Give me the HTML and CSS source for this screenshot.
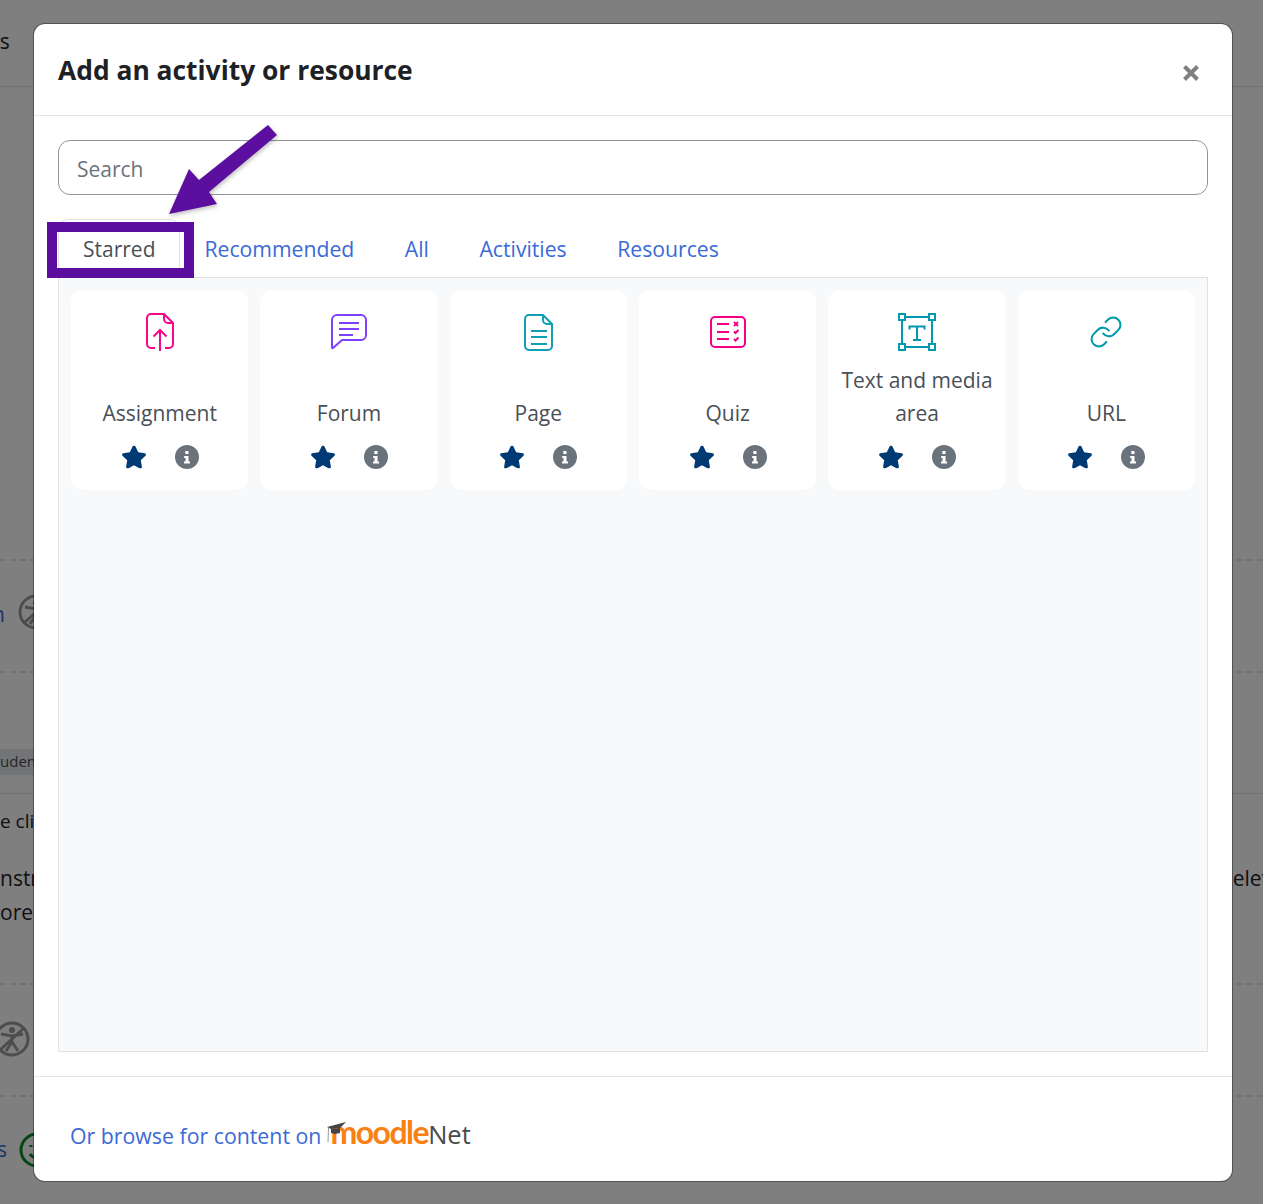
FILE: index.html
```html
<!DOCTYPE html>
<html lang="en">
<head>
    <meta charset="UTF-8">
    <title>Add an activity or resource</title>
    <link rel="stylesheet" href="styles.css">
</head>
<body>
    <!-- course page behind the dialog -->
    <div class="page">
        <div class="bgRow bgTop"><span class="peek peekEs">es</span></div>
        <div class="bgRow bgDashed bgAccess">
            <span class="peek peekBlue peekN">n</span>
            <svg class="bgIcon" width="36" height="36" viewBox="0 0 36 36"><use href="#accessIcon"/></svg>
        </div>
        <div class="bgRow bgDashed bgBadge"><span class="badge">uden</span></div>
        <div class="bgText">
            <div class="peek bgLineOne">e cli</div>
            <div class="bgPair">
                <div class="peek">nstr<br>ore</div>
                <div class="peek peekRight">elet</div>
            </div>
        </div>
        <div class="bgRow bgDashed bgAccessTwo">
            <svg class="bgIcon" width="36" height="36" viewBox="0 0 36 36"><use href="#accessIcon"/></svg>
        </div>
        <div class="bgRow bgDashed bgSmile">
            <span class="peek peekBlue peekS">s</span>
            <svg width="36" height="36" viewBox="0 0 36 36" fill="none" stroke="#0e8a2a" stroke-width="3">
                <circle cx="18" cy="18" r="16"/><path d="M11 22c3 5 11 5 14 0"/><path d="M12 13v2M24 13v2"/>
            </svg>
        </div>
    </div>

    <svg class="defs" width="0" height="0">
        <symbol id="accessIcon" viewBox="0 0 36 36">
            <g fill="none" stroke="#9a9a9a" stroke-width="3">
                <circle cx="18" cy="18" r="16"/>
                <path d="M7 13l11 2 11-2M18 15v6M18 21l-6 9M18 21l6 9M6 29L30 7"/>
            </g>
            <circle cx="18" cy="9" r="3" fill="#9a9a9a"/>
        </symbol>
        <symbol id="starIcon" viewBox="0 0 576 512">
            <path fill="#003a75" d="M316.9 18C311.6 7 300.4 0 288.1 0s-23.4 7-28.8 18L195 150.3 51.4 171.5c-12 1.8-22 10.2-25.7 21.7s-.7 24.2 7.9 32.7L137.8 329 113.2 474.7c-2 12 3 24.2 12.9 31.3s23 8 33.8 2.3l128.3-68.5 128.3 68.5c10.8 5.7 23.9 4.9 33.8-2.3s14.9-19.3 12.9-31.3L438.5 329 542.7 225.9c8.6-8.5 11.7-21.2 7.9-32.7s-13.7-19.9-25.7-21.7L381.2 150.3 316.9 18z"/>
        </symbol>
        <symbol id="infoIcon" viewBox="0 0 24 24">
            <circle cx="12" cy="12" r="12" fill="#6a737b"/>
            <path fill="#fff" d="M10.3 6h3.2v3h-3.2zM9.2 11h4.3v5.4H15v2.1H9v-2.1h1.5v-3.3H9.2z"/>
        </symbol>
    </svg>

    <div class="backdrop">
        <div class="modal">
            <div class="modalHeader">
                <h5 class="modalTitle">Add an activity or resource</h5>
                <svg class="closeIcon" width="18" height="18" viewBox="0 0 18 18" aria-label="Close"><path d="M2.5 2.5l13 13M15.500 2.500l-13 13"/></svg>
            </div>
            <div class="modalBody">
                <div class="searchBox">Search</div>
                <div class="tabs">
                    <span class="tab tabActive">Starred</span>
                    <span class="tab">Recommended</span>
                    <span class="tab">All</span>
                    <span class="tab">Activities</span>
                    <span class="tab">Resources</span>
                </div>
                <div class="tabPanel">
                    <div class="card">
                        <div class="cardIcon">
                            <svg width="28" height="38" viewBox="0 0 28 38" fill="none" stroke="#f7068b" stroke-width="2">
                                <path d="M9 35H5a4 4 0 0 1-4-4V5a4 4 0 0 1 4-4h13l9 9v21a4 4 0 0 1-4 4h-4"/>
                                <path d="M18 1v5a4 4 0 0 0 4 4h5"/>
                                <path d="M14 38V17M7.500 23.500L14 17l6.500 6.500"/>
                            </svg>
                        </div>
                        <div class="cardName">Assignment</div>
                        <div class="cardFooter">
                            <svg class="star" viewBox="0 0 576 512"><use href="#starIcon"/></svg>
                            <svg class="info" viewBox="0 0 24 24"><use href="#infoIcon"/></svg>
                        </div>
                    </div>
                    <div class="card">
                        <div class="cardIcon">
                            <svg width="36" height="36" viewBox="0 0 36 36" fill="none" stroke="#7f3fff" stroke-width="2">
                                <path d="M6 1h24a5 5 0 0 1 5 5v15a5 5 0 0 1-5 5H11l-9 8a.6.600 0 0 1-1-.5V6a5 5 0 0 1 5-5z"/>
                                <path d="M8 9h20M8 15h20M8 21h14"/>
                            </svg>
                        </div>
                        <div class="cardName">Forum</div>
                        <div class="cardFooter">
                            <svg class="star" viewBox="0 0 576 512"><use href="#starIcon"/></svg>
                            <svg class="info" viewBox="0 0 24 24"><use href="#infoIcon"/></svg>
                        </div>
                    </div>
                    <div class="card">
                        <div class="cardIcon">
                            <svg width="29" height="37" viewBox="0 0 29 37" fill="none" stroke="#0f9fb5" stroke-width="2">
                                <path d="M5 1h14l9 9v22a4 4 0 0 1-4 4H5a4 4 0 0 1-4-4V5a4 4 0 0 1 4-4z"/>
                                <path d="M19 1v5a4 4 0 0 0 4 4h5"/>
                                <path d="M7 17h16M7 23h16M7 30h16"/>
                            </svg>
                        </div>
                        <div class="cardName">Page</div>
                        <div class="cardFooter">
                            <svg class="star" viewBox="0 0 576 512"><use href="#starIcon"/></svg>
                            <svg class="info" viewBox="0 0 24 24"><use href="#infoIcon"/></svg>
                        </div>
                    </div>
                    <div class="card">
                        <div class="cardIcon">
                            <svg width="36" height="32" viewBox="0 0 36 32" fill="none" stroke="#f50087" stroke-width="2">
                                <rect x="1" y="1" width="34" height="30" rx="4"/>
                                <path d="M7 8h12M7 16h12M7 23h12"/>
                                <path d="M24 6l4 4M28 6l-4 4M24 15.500l1.500 1.500 3-3M24 23l1.500 1.500 3-3"/>
                            </svg>
                        </div>
                        <div class="cardName">Quiz</div>
                        <div class="cardFooter">
                            <svg class="star" viewBox="0 0 576 512"><use href="#starIcon"/></svg>
                            <svg class="info" viewBox="0 0 24 24"><use href="#infoIcon"/></svg>
                        </div>
                    </div>
                    <div class="card">
                        <div class="cardIcon">
                            <svg width="38" height="38" viewBox="0 0 38 38" fill="none" stroke="#0099ad" stroke-width="2">
                                <path d="M7 4h24M7 34h24M4 7v24M34 7v24"/>
                                <rect x="1" y="1" width="6" height="6"/>
                                <rect x="31" y="1" width="6" height="6"/>
                                <rect x="1" y="31" width="6" height="6"/>
                                <rect x="31" y="31" width="6" height="6"/>
                                <path d="M11.500 16.500v-3h15v3M19 13.500V27M15 27h8"/>
                            </svg>
                        </div>
                        <div class="cardName">Text and media area</div>
                        <div class="cardFooter">
                            <svg class="star" viewBox="0 0 576 512"><use href="#starIcon"/></svg>
                            <svg class="info" viewBox="0 0 24 24"><use href="#infoIcon"/></svg>
                        </div>
                    </div>
                    <div class="card">
                        <div class="cardIcon">
                            <svg width="32" height="32" viewBox="1 1 22 22" fill="none" stroke="#0099ad" stroke-width="1.400" stroke-linecap="round">
                                <path d="M10 13a5 5 0 0 0 7.540.54l3-3a5 5 0 0 0-7.070-7.070l-1.720 1.710"/>
                                <path d="M14 11a5 5 0 0 0-7.540-.54l-3 3a5 5 0 0 0 7.070 7.070l1.710-1.710"/>
                            </svg>
                        </div>
                        <div class="cardName">URL</div>
                        <div class="cardFooter">
                            <svg class="star" viewBox="0 0 576 512"><use href="#starIcon"/></svg>
                            <svg class="info" viewBox="0 0 24 24"><use href="#infoIcon"/></svg>
                        </div>
                    </div>
                </div>
            </div>
            <div class="modalFooter">
                <span class="browseLink">Or browse for content on</span>
                <span class="logo">
                    <svg class="logoCap" width="20" height="20" viewBox="0 0 20 20">
                        <path fill="#444" d="M0 5L19 0 13 6 4 7z"/>
                        <path fill="#444" d="M4 7l9-1v5l-5 1-4-1z"/>
                        <path fill="none" stroke="#999" d="M1.500 5.500L1 20"/>
                    </svg>
                    <span class="logoMoodle">moodle</span><span class="logoNet">Net</span>
                </span>
            </div>
        </div>
    </div>

    <!-- annotation drawn on top of the screenshot -->
    <div class="markBox"></div>
    <svg class="markArrow" width="120" height="100" viewBox="165 122 120 100">
        <path fill="#5c0f9f" d="M268 125l9 10-68 57 8 12-48 10 20-45 10 11z"/>
    </svg>
</body>
</html>
```

FILE: styles.css
```css
* {
    box-sizing: border-box;
}

html, body {
    margin: 0;
    height: 100%;
}

body {
    position: relative;
    width: 1263px;
    height: 1204px;
    overflow: hidden;
    font-family: "Open Sans", "Noto Sans", sans-serif;
    font-size: 21px;
    line-height: 33.6px;
    color: #495057;
    background-color: #fff;
}

.defs {
    display: block;
}

/* page behind the dialog */
.page {
    height: 1204px;
    color: #1d2125;
}

.bgRow {
    display: flex;
    align-items: center;
    gap: 14px;
}

.bgTop {
    height: 87px;
    padding-bottom: 2px;
    border-bottom: 1px solid #dee2e6;
}

.peekEs {
    margin-left: -12px;
}

.bgDashed {
    border-top: 2px dashed #dee2e6;
}

.bgAccess {
    margin-top: 472px;
    height: 112px;
    padding-bottom: 8px;
}

.peekN {
    width: 12px;
    margin-left: -8px;
    margin-right: 0;
    padding-top: 6px;
}

.bgBadge {
    height: 123px;
    align-items: flex-start;
    padding-top: 76px;
    border-bottom: 1px solid #dee2e6;
}

.badge {
    width: 34px;
    height: 26px;
    line-height: 25px;
    font-size: 15px;
    background-color: #e6e9ee;
    color: #495057;
}

.bgText {
    height: 189px;
    padding-top: 11px;
    display: flex;
    flex-direction: column;
    gap: 22px;
}

.bgLineOne {
    font-size: 19px;
}

.bgPair {
    display: flex;
    justify-content: space-between;
    line-height: 34px;
}

.peekRight {
    margin-right: -6px;
}

.peek {
    display: block;
    white-space: nowrap;
}

.peekBlue {
    color: #3a6ad6;
}

.peekS {
    width: 9px;
    margin-left: -3px;
    margin-right: -1px;
}

.bgAccessTwo {
    height: 112px;
    padding-bottom: 2px;
}

.bgAccessTwo .bgIcon {
    margin-left: -6px;
}

.bgSmile {
    height: 108px;
}

/* dialog */
.backdrop {
    position: absolute;
    top: 0;
    left: 0;
    right: 0;
    bottom: 0;
    padding: 23px 30px 22px 33px;
    background-color: rgba(0, 0, 0, 0.5);
}

.modal {
    display: flex;
    flex-direction: column;
    height: 1159px;
    background-color: #fff;
    background-clip: padding-box;
    border: 1px solid rgba(0, 0, 0, 0.35);
    border-radius: 12px;
}

.modalHeader {
    display: flex;
    justify-content: space-between;
    align-items: center;
    height: 92px;
    padding: 0 32px 0 24px;
    border-bottom: 1px solid #e4e6e9;
}

.modalTitle {
    margin: 0;
    font-size: 26.4px;
    font-weight: 700;
    line-height: 36px;
    color: #1d2125;
}

.closeIcon {
    margin-top: 7px;
    fill: none;
    stroke: #808080;
    stroke-width: 4;
}

.modalBody {
    flex: 1;
    display: flex;
    flex-direction: column;
    padding: 24px;
}

.searchBox {
    height: 55px;
    padding: 0 18px;
    line-height: 56px;
    color: #6a737b;
    border: 1px solid #8f959e;
    border-radius: 12px;
}

.tabs {
    display: flex;
    height: 58px;
    margin-top: 24px;
}

.tab {
    padding: 13px 25.500px 0 25px;
    height: 58px;
    font-size: 21.2px;
    color: #3a6ad6;
}

.tabActive {
    width: 122px;
    padding: 13px 0 0 24px;
    font-size: 21px;
    color: #495057;
    background-color: #fff;
    border: 1px solid #dee2e6;
    border-bottom-color: #fff;
    border-radius: 10px 10px 0 0;
}

.tabActive + .tab {
    padding-left: 24.5px;
}

.tabPanel {
    flex: 1;
    display: grid;
    grid-template-columns: repeat(6, 1fr);
    grid-auto-rows: 200px;
    gap: 12px;
    padding: 12px;
    background-color: #f8f9fa;
    border: 1px solid #dee2e6;
}

.card {
    display: flex;
    flex-direction: column;
    align-items: center;
    background-color: #fff;
    border-radius: 12px;
}

.cardIcon {
    display: flex;
    align-items: center;
    justify-content: center;
    height: 40px;
    margin-top: 22px;
}

.cardName {
    display: flex;
    align-items: flex-end;
    justify-content: center;
    height: 68px;
    margin-top: 11px;
    text-align: center;
}

.cardFooter {
    display: flex;
    align-items: center;
    gap: 28px;
    margin-top: 14px;
}

.star {
    width: 26px;
    height: 24px;
}

.info {
    width: 24px;
    height: 24px;
}

.modalFooter {
    display: flex;
    align-items: center;
    height: 105px;
    padding: 14px 0 0 36px;
    border-top: 1px solid #e4e6e9;
}

.browseLink {
    font-size: 21.3px;
    color: #3a6ad6;
}

.logo {
    display: flex;
    align-items: baseline;
    margin: -7px 0 0 5px;
    position: relative;
}

.logoCap {
    position: absolute;
    left: 1px;
    top: 8px;
}

.logoMoodle {
    padding-left: 4px;
    font-family: Lato, sans-serif;
    font-size: 32px;
    font-weight: 700;
    letter-spacing: -1.5px;
    line-height: 36px;
    color: #f98012;
}

.logoNet {
    font-size: 25.5px;
    line-height: 36px;
    color: #4a4a4a;
}

/* annotation */
.markBox {
    position: absolute;
    left: 47px;
    top: 222px;
    width: 147px;
    height: 56px;
    border: 10px solid #5c0f9f;
}

.markArrow {
    position: absolute;
    left: 165px;
    top: 122px;
    filter: drop-shadow(1px 2px 2px rgba(0, 0, 0, 0.25));
}
```
